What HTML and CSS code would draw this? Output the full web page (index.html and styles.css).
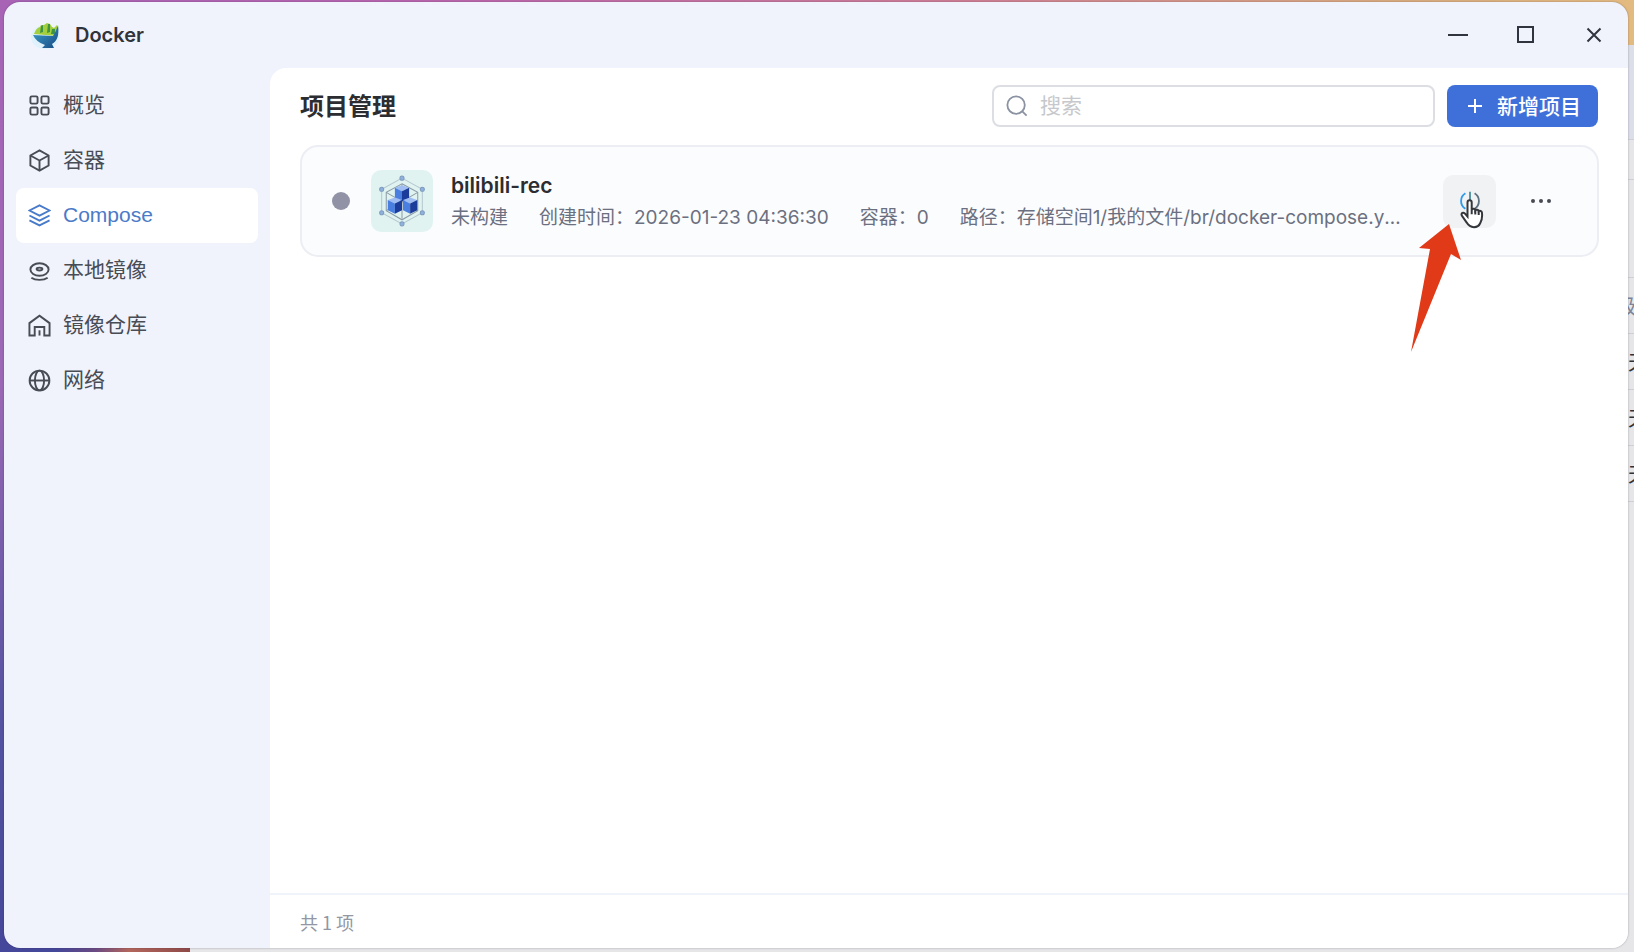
FILE: index.html
```
<!DOCTYPE html>
<html lang="zh-CN">
<head>
    <title>Docker</title>
    <meta charset="UTF-8">
    <meta name="viewport" content="width=device-width, initial-scale=1">
    <link rel="stylesheet" href="styles.css">
</head>
<body>
    <div class="desktop-left"></div>
    <!-- window behind -->
    <div class="back-window" aria-hidden="true">
        <div class="back-head"></div>
        <div class="back-bar"></div>
        <div class="back-tools"></div>
        <div class="back-row back-label">级</div>
        <div class="back-row">天</div>
        <div class="back-row">天</div>
        <div class="back-row">天</div>
    </div>

    <div class="window">
        <header class="titlebar">
            <svg class="logo" viewBox="0 0 30 30">
                <defs>
                    <linearGradient id="hull" x1="0" y1="0" x2="1" y2="1">
                        <stop offset="0" stop-color="#3fa5cc"/>
                        <stop offset="1" stop-color="#174a86"/>
                    </linearGradient>
                </defs>
                <ellipse cx="15" cy="17" rx="14" ry="12" fill="#d3f2fa" opacity="0.6"/>
                <path d="M4 14 Q6 8 10 7 L11 5 L14 5 L17 3 L20 4 L22 7 L24 8 L27 5 V16 Z" fill="#a3cf3c"/>
                <path d="M11 6 l2 -1 v7 l-3 1 z M18 4 l2 0 v8 l-3 1 z M22 9 h3 v5 h-4 z" fill="#3f9443"/>
                <path d="M3 15 L23 16 Q26 12 28 5 Q30 20 22 24 L24 28 H12 L15 25 Q6 22 3 15 Z" fill="url(#hull)"/>
            </svg>
            <h1 class="app-name">Docker</h1>
            <div class="window-buttons">
                <button type="button" aria-label="最小化">
                    <svg viewBox="0 0 24 24"><path d="M2 12h20"/></svg>
                </button>
                <button type="button" aria-label="最大化">
                    <svg viewBox="0 0 24 24"><rect x="4" y="4" width="15" height="15"/></svg>
                </button>
                <button type="button" aria-label="关闭">
                    <svg viewBox="0 0 24 24"><path d="M5.500 5.500l13 13M18.500 5.500l-13 13"/></svg>
                </button>
            </div>
        </header>

        <div class="layout">
            <nav class="sidebar">
                <a href="#" class="nav-item">
                    <svg viewBox="0 0 24 24"><rect x="2.500" y="2.500" width="7.500" height="7.500" rx="1.500"/><rect x="14" y="2.500" width="7.500" height="7.500" rx="1.500"/><rect x="2.500" y="14" width="7.500" height="7.500" rx="1.500"/><rect x="14" y="14" width="7.500" height="7.500" rx="1.500"/></svg>
                    <span>概览</span>
                </a>
                <a href="#" class="nav-item">
                    <svg viewBox="0 0 24 24"><path d="M12 1.500l9.500 5.300v10.400L12 22.500l-9.500-5.300V6.800z"/><path d="M2.500 6.800L12 12l9.500-5.200M12 12v10.500"/></svg>
                    <span>容器</span>
                </a>
                <a href="#" class="nav-item active">
                    <svg viewBox="0 0 24 24"><path d="M12 1.500l10.500 5.300L12 12.100 1.500 6.800z"/><path d="M1.500 12L12 17.300 22.500 12M1.500 17L12 22.300 22.500 17"/></svg>
                    <span>Compose</span>
                </a>
                <a href="#" class="nav-item">
                    <svg viewBox="0 0 24 24"><ellipse cx="12" cy="11" rx="9.500" ry="6.500"/><ellipse cx="12" cy="10.500" rx="3" ry="1.500"/><path d="M3.500 19.500c4 3 13 3 17 0"/></svg>
                    <span>本地镜像</span>
                </a>
                <a href="#" class="nav-item">
                    <svg viewBox="0 0 24 24"><path d="M1.500 22.500V9.500L12 1.800l10.500 7.700v13H17v-9H7v9z"/><path d="M12 17v5.500"/></svg>
                    <span>镜像仓库</span>
                </a>
                <a href="#" class="nav-item">
                    <svg viewBox="0 0 24 24"><circle cx="12" cy="12" r="10.300"/><ellipse cx="12" cy="12" rx="4.800" ry="10.300"/><path d="M1.700 12h20.600"/></svg>
                    <span>网络</span>
                </a>
            </nav>

            <main class="content">
                <div class="toolbar">
                    <h2>项目管理</h2>
                    <label class="search">
                        <svg viewBox="0 0 24 24"><circle cx="11" cy="11" r="9.500"/><path d="M17.500 17.500l5 5"/></svg>
                        <input type="text" placeholder="搜索" aria-label="搜索">
                    </label>
                    <button type="button" class="add">
                        <svg viewBox="0 0 16 16"><path d="M8 1v14M1 8h14"/></svg>
                        <span>新增项目</span>
                    </button>
                </div>

                <div class="projects">
                    <article class="project">
                        <span class="status"></span>
                        <svg class="project-icon" viewBox="0 0 61 61">
                            <rect width="61" height="61" rx="10" fill="#e0f3f1"/>
                            <path d="M30.500 8L50.500 19v23l-20 11-20-11V19z" fill="none" stroke="#b5c8cf"/>
                            <path d="M30.500 13.500L46 22v18l-15.500 9L15 40V22z" fill="none" stroke="#8b9ca4"/>
                            <path d="M30.500 14v34M15 22l31 18M46 22L15 40" stroke="#8b9ca4" fill="none"/>
                            <g fill="#8fb2dd" stroke="#7e9cc0">
                                <circle cx="30.500" cy="8" r="2"/><circle cx="50.500" cy="19" r="2"/><circle cx="50.500" cy="42" r="2"/>
                                <circle cx="30.500" cy="53" r="2"/><circle cx="10.500" cy="42" r="2"/><circle cx="10.500" cy="19" r="2"/>
                            </g>
                            <g id="cube">
                                <path d="M23.500 17.500l7-2.500 7 2.500-7 3.500z" fill="#9fbdf3"/>
                                <path d="M23.500 17.500l7 3.500V31l-7-3.500z" fill="#4a7fe2"/>
                                <path d="M37.500 17.500l-7 3.500V31l7-3.500z" fill="#1c3c9c"/>
                            </g>
                            <use href="#cube" x="-7" y="12"/>
                            <use href="#cube" x="8" y="12"/>
                        </svg>
                        <div class="info">
                            <h3>bilibili-rec</h3>
                            <p class="meta">
                                <span>未构建</span>
                                <span>创建时间：2026-01-23 04:36:30</span>
                                <span>容器：0</span>
                                <span class="path">路径：存储空间1/我的文件/br/docker-compose.yml</span>
                            </p>
                        </div>
                        <div class="actions">
                            <button type="button" class="power" aria-label="启动">
                                <svg viewBox="0 0 24 24"><path d="M7 3.500a10 10 0 0 0 0 17" stroke="#2f9bea"/><path d="M17 3.500a10 10 0 0 1 0 17" stroke="#5d7180"/><path d="M12 2v9" stroke="#4a8f9c"/></svg>
                            </button>
                            <button type="button" class="more" aria-label="更多">
                                <svg viewBox="0 0 24 24"><circle cx="4" cy="12" r="2"/><circle cx="12" cy="12" r="2"/><circle cx="20" cy="12" r="2"/></svg>
                            </button>
                            <svg class="arrow" viewBox="0 0 51 128"><path d="M38 0L50 36 40 30 0 128 19 25 8 24z"/></svg>
                            <svg class="pointer" viewBox="0 0 24 30"><path d="M7.500 17.500V3.500c0-3 4.200-3 4.200 0v7.300c.6-1.600 3.400-1.300 3.600.6.900-1.300 3.200-.8 3.400.9 1-.9 3.100-.3 3.300 1.500.4 4.500-.3 7.800-1.700 10.200-1.300 3-3.300 4.200-6.300 4.200-3.700 0-5.600-1.600-7.300-4.600L1.800 16.500c-1-2.500 1.400-3.600 3-2.100z"/><path d="M11.700 10.800v4.500M15.300 11.500v4M18.700 12.500v3.500"/></svg>
                        </div>
                    </article>
                </div>

                <footer class="footer">共 1 项</footer>
            </main>
        </div>
    </div>
</body>
</html>
```
FILE: styles.css
```
* {
    box-sizing: border-box;
}

body {
    margin: 0;
    height: 100vh;
    padding: 2px 6px 4px 4px;
    overflow: hidden;
    position: relative;
    font-family: Inter, "Noto Sans CJK SC", sans-serif;
    font-size: 21px;
    color: #404550;
    background: linear-gradient(90deg, #a863b5 0%, #b964ae 25%, #cf7f93 60%, #d9ab7e 85%, #e3ba80 100%);
}

h1, h2, h3, p {
    margin: 0;
}

button {
    font-family: inherit;
    border: none;
    background: none;
    padding: 0;
    display: flex;
    align-items: center;
    justify-content: center;
    cursor: pointer;
}

svg {
    flex-shrink: 0;
    fill: none;
    stroke-width: 2;
}

/* desktop */
.desktop-left {
    position: absolute;
    left: 0;
    top: 0;
    bottom: 0;
    width: 190px;
    background: linear-gradient(90deg, #45479a 30%, #6a4a83 50%, #b3665c 68%, #8f4a48 100%) bottom / 100% 6px no-repeat, linear-gradient(#a863b5, #9c68b5 40%, #5553a2 75%, #45479a) left / 20px 100% no-repeat;
}

.back-window {
    position: absolute;
    left: 190px;
    right: 0;
    top: 45px;
    bottom: 0;
    background: #e6e6e8;
    display: flex;
    flex-direction: column;
    align-items: flex-end;
    overflow: hidden;
}

.back-window div {
    width: 100%;
    border-bottom: 1px solid #cfd0d6;
}

.back-head {
    height: 95px;
    background: #dcdee8;
}

.back-bar {
    height: 40px;
}

.back-tools {
    height: 98px;
}

.back-window .back-row {
    height: 56px;
    width: 6px;
    line-height: 58px;
    font-size: 20px;
    color: #303238;
}

.back-window .back-label {
    width: 18px;
    color: #7d8498;
}

/* window */
.window {
    position: relative;
    height: 100%;
    display: flex;
    flex-direction: column;
    background: #f0f3fc;
    border-radius: 16px;
    overflow: hidden;
    box-shadow: 0 0 2px rgba(40, 30, 60, 0.4);
}

.titlebar {
    height: 66px;
    display: flex;
    align-items: center;
    gap: 15px;
    padding: 0 16px 0 26px;
}

.logo {
    width: 30px;
    height: 30px;
}

.app-name {
    font-size: 20px;
    font-weight: 600;
    color: #30343b;
}

.window-buttons {
    margin-left: auto;
    display: flex;
    gap: 32px;
}

.window-buttons button {
    width: 36px;
    height: 36px;
}

.window-buttons svg {
    width: 24px;
    height: 24px;
    stroke: #30343f;
}

.layout {
    flex: 1;
    min-height: 0;
    display: flex;
}

/* sidebar */
.sidebar {
    width: 266px;
    flex-shrink: 0;
    padding: 10px 12px;
    display: flex;
    flex-direction: column;
}

.nav-item {
    height: 55px;
    padding: 0 12px;
    display: flex;
    align-items: center;
    gap: 12px;
    border-radius: 8px;
    font-family: "Liberation Sans", "Noto Sans CJK SC", sans-serif;
    line-height: 24px;
    color: #484c55;
    text-decoration: none;
}

.nav-item span {
    padding-bottom: 2px;
}

.nav-item svg {
    width: 23px;
    height: 23px;
    stroke: currentColor;
}

.nav-item.active {
    background: #fff;
    color: #4a7bc8;
}

/* content */
.content {
    flex: 1;
    min-width: 0;
    display: flex;
    flex-direction: column;
    background: #fff;
    border-top-left-radius: 16px;
}

.toolbar {
    display: flex;
    align-items: center;
    gap: 12px;
    padding: 17px 30px 18px;
}

.toolbar h2 {
    flex: 1;
    padding-top: 2px;
    font-size: 24px;
    line-height: 36px;
    font-weight: 700;
    color: #2b2d31;
}

.search {
    width: 443px;
    height: 42px;
    display: flex;
    align-items: center;
    gap: 12px;
    padding: 0 12px;
    border: 2px solid #dcdee3;
    border-radius: 8px;
}

.search svg {
    width: 22px;
    height: 22px;
    stroke: #8b93a3;
}

.search input {
    flex: 1;
    min-width: 0;
    padding: 0 0 2px;
    border: none;
    outline: none;
    background: none;
    font-family: inherit;
    font-size: 21px;
    color: #404550;
}

.search input::placeholder {
    color: #c6c8cc;
}

.add {
    width: 151px;
    height: 42px;
    gap: 14px;
    padding-left: 3px;
    border-radius: 8px;
    background: #3f70d9;
    color: #fff;
    font-size: 21px;
    font-weight: 500;
}

.add span {
    padding-bottom: 2px;
}

.add svg {
    width: 16px;
    height: 16px;
    stroke: #fff;
}

.projects {
    flex: 1;
    padding: 0 29px 0 30px;
}

.project {
    height: 112px;
    display: flex;
    align-items: center;
    padding: 0 30px;
    border: 2px solid #eceef3;
    border-radius: 18px;
    background: #fbfcfe;
}

.status {
    width: 18px;
    height: 18px;
    margin-right: 21px;
    border-radius: 50%;
    background: #9192a6;
}

.project-icon {
    width: 62px;
    height: 62px;
    margin-right: 18px;
    stroke-width: 1;
}

.info {
    flex: 1;
    min-width: 0;
    padding-top: 2px;
}

.info h3 {
    font-size: 21px;
    line-height: 32px;
    font-weight: 600;
    color: #2b2d31;
}

.meta {
    display: flex;
    gap: 31px;
    font-size: 19px;
    line-height: 32px;
    color: #6b7080;
    white-space: nowrap;
}

.path {
    min-width: 0;
    overflow: hidden;
    text-overflow: ellipsis;
}

.actions {
    position: relative;
    display: flex;
    gap: 18px;
    margin-left: 42px;
}

.actions button {
    width: 53px;
    height: 53px;
    border-radius: 10px;
}

.actions .power {
    background: #f1f2f4;
}

.power svg {
    width: 22px;
    height: 22px;
}

.more svg {
    width: 24px;
    height: 24px;
    fill: #484b54;
}

/* pointer and arrow lie over the card */
.arrow {
    position: absolute;
    left: -32px;
    top: 49px;
    width: 51px;
    height: 128px;
    fill: #e03a18;
}

.pointer {
    position: absolute;
    left: 17px;
    top: 24px;
    width: 24px;
    height: 30px;
    fill: #fff;
    stroke: #33363a;
}

.footer {
    height: 55px;
    padding: 0 30px;
    border-top: 2px solid #f0f3fa;
    font-family: "Noto Sans CJK SC", sans-serif;
    font-size: 18px;
    line-height: 54px;
    color: #9297a3;
}
```
